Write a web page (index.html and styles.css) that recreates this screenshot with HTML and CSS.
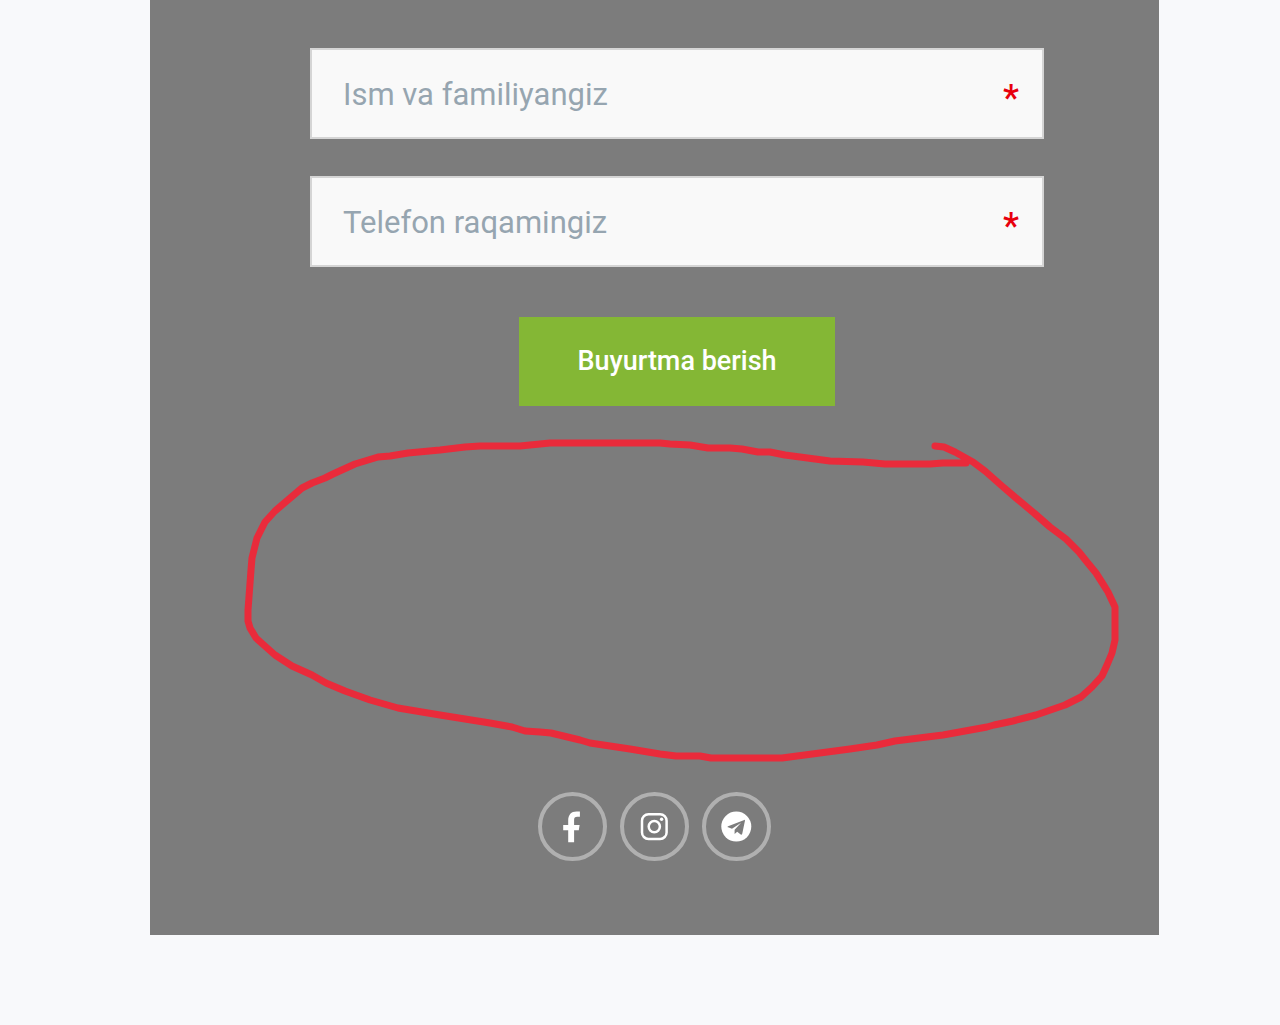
FILE: index.html
```html
<!DOCTYPE html>
<html lang="uz">
<head>
<meta charset="utf-8">
<meta name="viewport" content="width=device-width, initial-scale=1">
<title>Buyurtma berish</title>
<link rel="stylesheet" href="styles.css">
</head>
<body>
<main class="panel">
  <form class="order-form">
    <div class="field">
      <input class="field-input" id="name" type="text" placeholder="Ism va familiyangiz" aria-label="Ism va familiyangiz" required>
      <label class="field-mark" for="name">*</label>
    </div>
    <div class="field">
      <input class="field-input" id="phone" type="tel" placeholder="Telefon raqamingiz" aria-label="Telefon raqamingiz" required>
      <label class="field-mark" for="phone">*</label>
    </div>
    <button class="submit" type="submit">Buyurtma berish</button>
  </form>

  <svg class="marker" viewBox="150 406 1009 386" aria-hidden="true">
    <polyline points="935,446 944,447 955,452 973,462 985,471 1002,486 1016,498 1034,513 1050,527 1066,539 1079,552 1087,562 1096,573 1103,584 1108,592 1115,607 1115,640 1112,653 1107,665 1102,676 1092,687 1081,697 1065,705 1036,715 1013,721 994,725 987,727 943,735 895,741 877,745 850,749 782,758 711,758 700,756 676,756 660,754 630,749 590,743 580,740 551,733 540,732 525,731 512,727 490,723 465,719 440,715 398,708 370,700 345,691 326,683 312,675 292,666 275,655 256,638 250,628 248,621 248,610 251,570 252,558 257,538 265,522 275,511 302,488 312,483 325,478 333,474 355,464 378,457 390,456 408,453 440,450 465,447 480,446 520,446 550,443 660,443 670,444 690,445 708,448 730,448 742,449 758,452 770,452 785,455 815,459 830,461 863,462 885,464 930,464 943,463 966,463"/>
  </svg>

  <nav class="social" aria-label="Ijtimoiy tarmoqlar">
    <a class="social-link" href="#facebook" aria-label="Facebook">
      <svg class="icon" viewBox="0 0 32 32" aria-hidden="true"><path d="M11.200 31.300V19.300H6.200v-5.300h5V9.600C11.200 3.900 14.200.6 19.500.6h3.400v5.100h-2.600c-2.400 0-3.200 1-3.200 3.200v5.100h5.500l-.8 5.300h-4.700v12z"/></svg>
    </a>
    <a class="social-link" href="#instagram" aria-label="Instagram">
      <svg class="icon icon-line" viewBox="0 0 32 32" aria-hidden="true"><rect x="3" y="3.300" width="24.600" height="24.600" rx="6.500"/><circle cx="15.300" cy="15.600" r="5.600"/><circle class="dot" cx="22.600" cy="8.300" r="1.700"/></svg>
    </a>
    <a class="social-link" href="#telegram" aria-label="Telegram">
      <svg class="icon" viewBox="0 0 32 32" aria-hidden="true"><circle cx="15.300" cy="15.600" r="15"/><path class="plane" d="M23.300 8.900 7.100 15.200c-.7.300-.7.900 0 1.100l3.900 1.400 9.100-6-6.500 7v4.400l2.600-2.400 3.500 2.700c.8.500 1.400.2 1.600-.8l2.600-12.700c.2-.9 0-1.300-.6-1z"/></svg>
    </a>
  </nav>
</main>
</body>
</html>
```
FILE: styles.css
```css
* {
  box-sizing: border-box;
}

body {
  margin: 0;
  padding: 0 121px 90px 150px;
  background: #f8f9fb;
  font-family: Roboto, "Liberation Sans", sans-serif;
}

.panel {
  padding: 48px 0 74px;
  background: #7c7c7c;
}

.order-form {
  display: flex;
  flex-direction: column;
  margin: 0 115px 0 160px;
}

.field {
  position: relative;
  margin-bottom: 37px;
}

.field-input {
  display: block;
  width: 100%;
  height: 91px;
  padding: 2px 72px 0 31px;
  border: 2px solid #d5d5d5;
  border-radius: 0;
  background: #f9f9f9;
  color: #444;
  font: 400 31px/40px Roboto, "Liberation Sans", sans-serif;
}

.field-input::placeholder {
  color: #96a5b0;
  opacity: 1;
}

.field-mark {
  position: absolute;
  top: 30px;
  right: 25px;
  color: #e8000d;
  font-size: 36px;
  font-weight: 500;
  line-height: 40px;
}

.submit {
  align-self: center;
  margin-top: 13px;
  padding: 24px 58px;
  border: 0;
  background: #84b735;
  color: #fff;
  font: 500 27px/41px Roboto, "Liberation Sans", sans-serif;
  cursor: pointer;
}

.marker {
  display: block;
  width: 100%;
  height: auto;
  fill: none;
  stroke: #e92b3b;
  stroke-width: 7;
  stroke-linecap: round;
  stroke-linejoin: round;
}

.social {
  display: flex;
  justify-content: center;
  gap: 13px;
}

.social-link {
  display: flex;
  align-items: center;
  justify-content: center;
  width: 69px;
  height: 69px;
  border: 4px solid #b0b0b0;
  border-radius: 50%;
}

.icon {
  width: 32px;
  height: 32px;
  overflow: visible;
  fill: #fff;
}

.icon-line {
  fill: none;
  stroke: #fff;
  stroke-width: 2.5;
}

.icon-line .dot {
  fill: #fff;
  stroke: none;
}

.icon .plane {
  fill: #7c7c7c;
}
```
